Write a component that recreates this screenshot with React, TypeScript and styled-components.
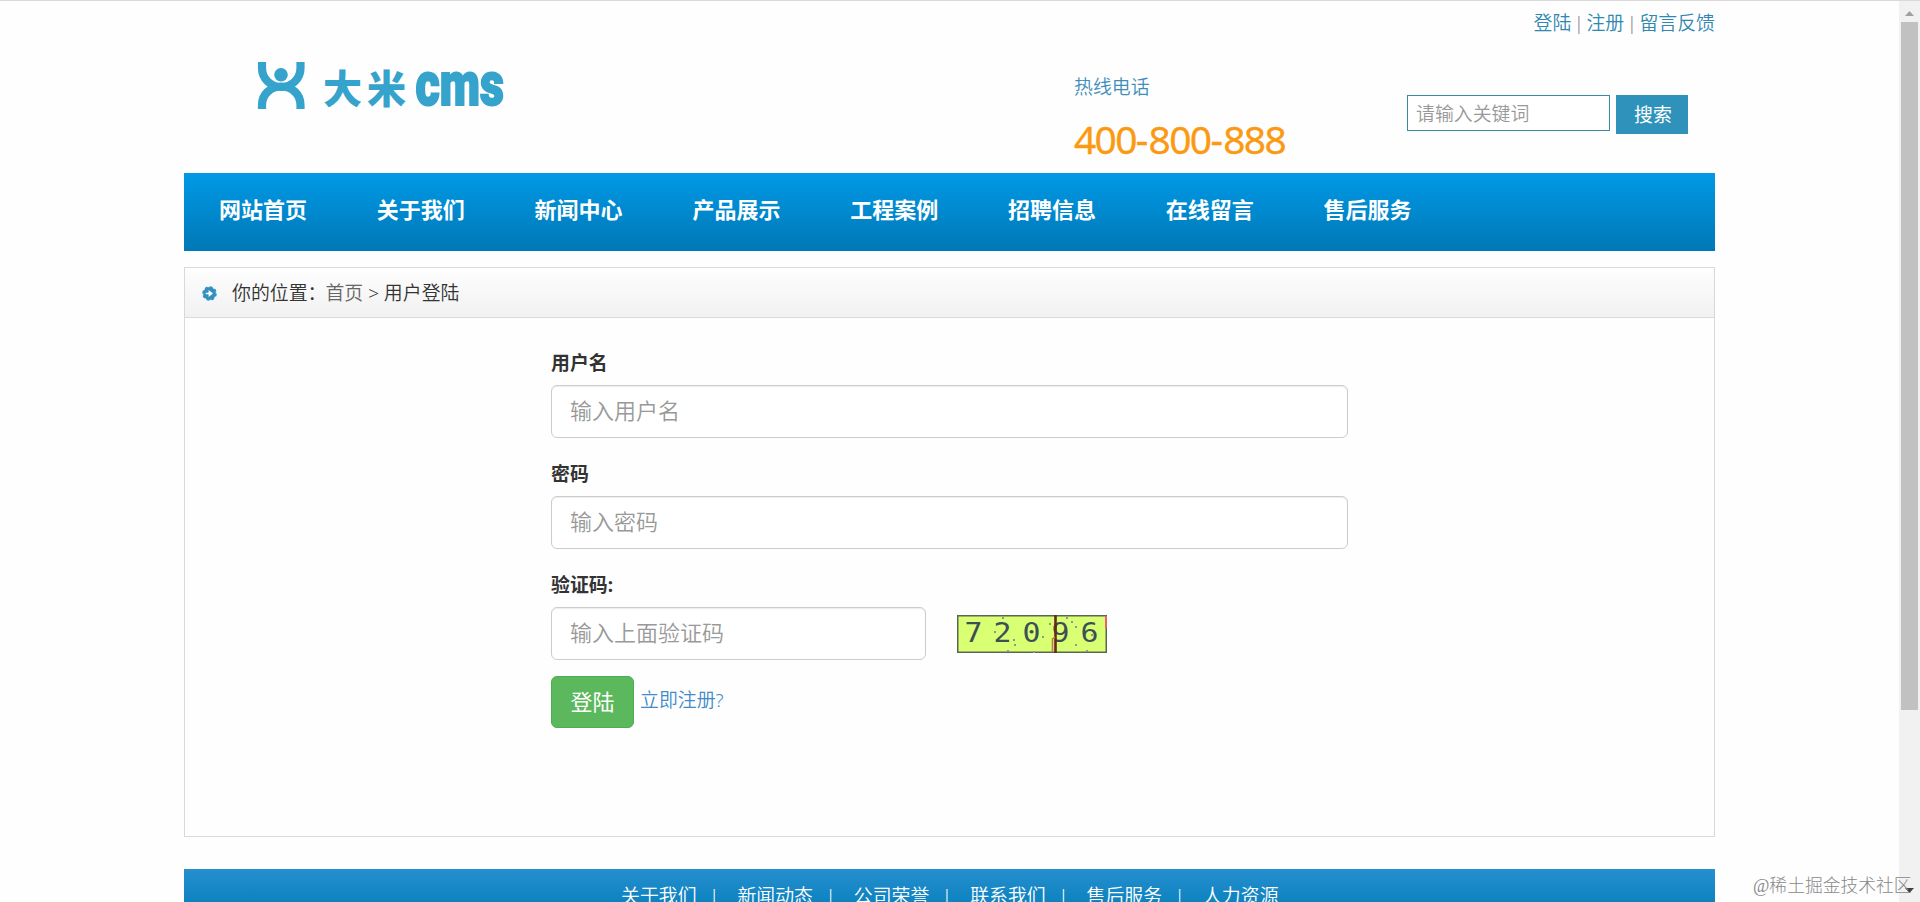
import React from "react";
import styled, { createGlobalStyle } from "styled-components";

const GlobalStyle = createGlobalStyle`
  * { box-sizing: border-box; }
  html, body { margin: 0; padding: 0; overflow: hidden; }
  body {
    background: #fefefe;
    color: #333;
    font-family: "Noto Sans", "Noto Sans CJK SC", sans-serif;
    font-weight: 350;
    font-size: 18.9px;
    line-height: 27px;
  }
  a { text-decoration: none; color: inherit; }
  input, button { font: inherit; }
`;

const Window = styled.div`
  display: flex;
  height: 902px;
  overflow: hidden;
  border-top: 1px solid #d9d9db;
`;

const Page = styled.div`
  flex: 1;
  display: flex;
  flex-direction: column;
  align-items: center;
`;

const Container = styled.div`
  width: 1531px;
  flex: none;
`;

const TopLinks = styled.div`
  height: 46px;
  padding-top: 9px;
  display: flex;
  justify-content: flex-end;
  color: #888;
  a { color: #3088b0; }
`;

const Divider = styled.span`
  width: 15.2px;
  text-align: center;
`;

const Header = styled.header`
  height: 126px;
  display: flex;
  align-items: flex-start;
`;

const Logo = styled.svg`
  width: 260px;
  height: 70px;
  margin: 3px 0 0 66px;
  flex: none;
`;

const Hotline = styled.div`
  margin: 27px 0 0 564px;
  width: 333px;
  color: #3f8fbc;
`;

const Phone = styled.div`
  margin-top: 18px;
  font-family: "Noto Sans", "Open Sans", sans-serif;
  font-weight: 400;
  font-size: 39px;
  line-height: 40px;
  letter-spacing: -1.7px;
  color: #fb9a12;
  -webkit-text-stroke: 0.3px #fb9a12;
  span { letter-spacing: 0.2px; }
`;

const Search = styled.form`
  display: flex;
  align-items: flex-start;
  gap: 6px;
  margin-top: 48px;
`;

const SearchInput = styled.input`
  width: 203px;
  height: 36px;
  padding: 2px 0 0 8px;
  border: 1px solid #3a8ca6;
  background: #fff;
  outline: none;
  &::placeholder { color: #999; opacity: 1; }
`;

const SearchButton = styled.button`
  width: 72px;
  height: 39px;
  padding: 1px 0 0 2px;
  border: 0;
  background: #2f92ba;
  color: #fff;
  font-weight: 400;
`;

const Nav = styled.nav`
  height: 78px;
  display: flex;
  background: linear-gradient(#0099e6, #0078b6);
  a {
    width: 157.8px;
    padding-left: 35px;
    line-height: 73px;
    color: #fff;
    font-weight: 700;
    font-size: 22px;
  }
`;

const Panel = styled.main`
  margin-top: 16px;
  height: 570px;
  border: 1px solid #d9d9d9;
`;

const Breadcrumb = styled.div`
  height: 50px;
  display: flex;
  align-items: center;
  padding-left: 17px;
  border-bottom: 1px solid #d9d9d9;
  background: linear-gradient(#fefefe, #f1f1f1);
  white-space: pre;
  svg { margin: 1px 15px 0 0; }
  a { color: #666; margin-left: -1px; }
  a, span { padding-top: 2px; }
`;

const LoginForm = styled.form`
  width: 797px;
  margin-left: 366px;
  padding-top: 30px;
`;

const Field = styled.div`
  height: 111px;
`;

const Label = styled.label`
  display: block;
  height: 37px;
  padding-top: 2px;
  font-weight: 700;
`;

const TextInput = styled.input<{ $width: number }>`
  display: block;
  width: ${(p) => p.$width}px;
  height: 53px;
  padding: 0 18px 3px;
  border: 1px solid #ccc;
  border-radius: 6px;
  background: #fff;
  box-shadow: inset 0 1px 1px rgba(0, 0, 0, 0.075);
  font-size: 22px;
  outline: none;
  &::placeholder { color: #999; opacity: 1; }
`;

const CaptchaRow = styled.div`
  display: flex;
  gap: 31px;
  svg { margin-top: 8px; }
`;

const Actions = styled.div`
  display: flex;
  gap: 6px;
  margin-top: -5px;
  a { color: #428bca; line-height: 48px; }
`;

const LoginButton = styled.button`
  width: 83px;
  height: 52px;
  padding: 0 0 2px;
  border: 1px solid #4cae4c;
  border-radius: 6px;
  background: #5cb85c;
  color: #fff;
  font-size: 22px;
  font-weight: 400;
`;

const Footer = styled.footer`
  margin-top: 32px;
  height: 120px;
  padding: 14px 0 0 437px;
  display: flex;
  background: linear-gradient(#268fce, #0e82c0 33px, #0e78b4);
  color: #fff;
  a { width: 84px; }
  span { width: 32.4px; padding-left: 4px; }
`;

const Scrollbar = styled.div`
  width: 21px;
  display: flex;
  flex-direction: column;
  align-items: center;
  background: #f1f1f1;
`;

const Thumb = styled.div`
  width: 17px;
  height: 688px;
  margin: 6px 0 auto;
  background: #c1c1c1;
`;

const Arrow = styled.svg<{ $top?: boolean }>`
  width: 9px;
  height: 5px;
  flex: none;
  margin: ${(p) => (p.$top ? "10px 0 0" : "0 0 9px")};
`;

const Watermark = styled.div`
  position: absolute;
  left: 1753px;
  top: 873px;
  font-size: 17.8px;
  line-height: 27px;
  font-weight: 200;
  font-family: "Liberation Serif", "Noto Sans CJK SC", serif;
  color: #888;
  white-space: nowrap;
`;

const navItems = ["网站首页", "关于我们", "新闻中心", "产品展示", "工程案例", "招聘信息", "在线留言", "售后服务"];
const footerItems = ["关于我们", "新闻动态", "公司荣誉", "联系我们", "售后服务", "人力资源"];
const specks: [number, number][] = [[45, 2], [37, 16], [56, 24], [50, 35], [57, 29], [85, 21], [92, 8], [118, 11], [114, 6], [118, 29], [129, 35], [134, 19], [109, 2], [76, 36]];

function LogoMark() {
  return (
    <Logo viewBox="250 50 260 70">
      <g fill="none" stroke="#35a3cb" strokeWidth="8.2">
        <path d="M262 62V68C262 79 271 87 281.3 87S300.5 79 300.5 68V62" />
        <path d="M262 109V105C262 94 271 86.5 281.3 86.5S300.5 94 300.5 105V109" />
      </g>
      <circle cx="281" cy="74.7" r="6.8" fill="#35a3cb" />
      <g fill="#35a3cb" stroke="#35a3cb">
        <text x="323" y="103" fontSize="39" fontWeight="900" strokeWidth="0" fontFamily="Noto Sans CJK SC, sans-serif" textLength="83">大米</text>
        <text transform="translate(415.5 104.7) scale(0.66 1)" fontSize="61" fontWeight="900" strokeWidth="2" fontFamily="Roboto, sans-serif" textLength="134" lengthAdjust="spacingAndGlyphs">cms</text>
      </g>
    </Logo>
  );
}

function Captcha() {
  return (
    <svg width="150" height="38" viewBox="0 0 150 38">
      <rect x="0.75" y="0.75" width="148.5" height="36.5" fill="#d9ff72" stroke="#5a6652" strokeWidth="1.5" />
      <path d="M149 1V13" stroke="#e8606c" strokeWidth="2" />
      {specks.map(([x, y]) => (
        <rect key={`${x}-${y}`} x={x} y={y} width="2" height="2" fill="#8b9a8c" />
      ))}
      <g fill="#3d4f55" fontFamily="DejaVu Sans Mono, monospace" fontSize="26">
        {["7", "2", "0", "9", "6"].map((d, i) => (
          <text key={d} transform={`translate(${7.5 + i * 29} 26.5) scale(1.15 1)`}>{d}</text>
        ))}
      </g>
      <path d="M98.5 0V38" stroke="#642a1c" strokeWidth="2.6" />
      <path d="M95.5 37V24L98 22" stroke="#c07a50" strokeWidth="1.6" fill="none" />
    </svg>
  );
}

export default function App() {
  return (
    <>
      <GlobalStyle />
      <Window>
        <Page>
          <Container>
            <TopLinks>
              <a href="#login">登陆</a><Divider>|</Divider>
              <a href="#register">注册</a><Divider>|</Divider>
              <a href="#feedback">留言反馈</a>
            </TopLinks>
            <Header>
              <LogoMark />
              <Hotline>
                热线电话
                <Phone>400<span>-</span>800<span>-</span>888</Phone>
              </Hotline>
              <Search>
                <SearchInput placeholder="请输入关键词" />
                <SearchButton type="button">搜索</SearchButton>
              </Search>
            </Header>
            <Nav>
              {navItems.map((t) => <a key={t} href="#nav">{t}</a>)}
            </Nav>
            <Panel>
              <Breadcrumb>
                <svg width="15" height="15" viewBox="0 0 15 15">
                  <circle cx="7.5" cy="7.5" r="6.4" fill="#3290c0" />
                  <circle cx="7.5" cy="7.5" r="6.6" fill="none" stroke="#3290c0" strokeWidth="1.4" strokeDasharray="3 2.18" />
                  <path d="M3.8 6.7H6.6V4L11 7.5L6.6 11V8.3H3.8Z" fill="#fff" />
                </svg>
                <span>你的位置：</span><a href="#home">首页</a><span> &gt; 用户登陆</span>
              </Breadcrumb>
              <LoginForm>
                <Field>
                  <Label>用户名</Label>
                  <TextInput $width={797} placeholder="输入用户名" />
                </Field>
                <Field>
                  <Label>密码</Label>
                  <TextInput $width={797} type="password" placeholder="输入密码" />
                </Field>
                <Field>
                  <Label>验证码:</Label>
                  <CaptchaRow>
                    <TextInput $width={375} placeholder="输入上面验证码" />
                    <Captcha />
                  </CaptchaRow>
                </Field>
                <Actions>
                  <LoginButton type="button">登陆</LoginButton>
                  <a href="#register">立即注册?</a>
                </Actions>
              </LoginForm>
            </Panel>
            <Footer>
              {footerItems.map((t, i) => (
                <React.Fragment key={t}>
                  <a href="#footer">{t}</a>
                  {i < footerItems.length - 1 && <span>|</span>}
                </React.Fragment>
              ))}
            </Footer>
          </Container>
        </Page>
        <Scrollbar>
          <Arrow $top viewBox="0 0 9 5"><path d="M0 5L4.5 0L9 5Z" fill="#a0a0a0" /></Arrow>
          <Thumb />
          <Arrow viewBox="0 0 9 5"><path d="M0 0L4.5 5L9 0Z" fill="#404040" /></Arrow>
        </Scrollbar>
      </Window>
      <Watermark>@稀土掘金技术社区</Watermark>
    </>
  );
}
